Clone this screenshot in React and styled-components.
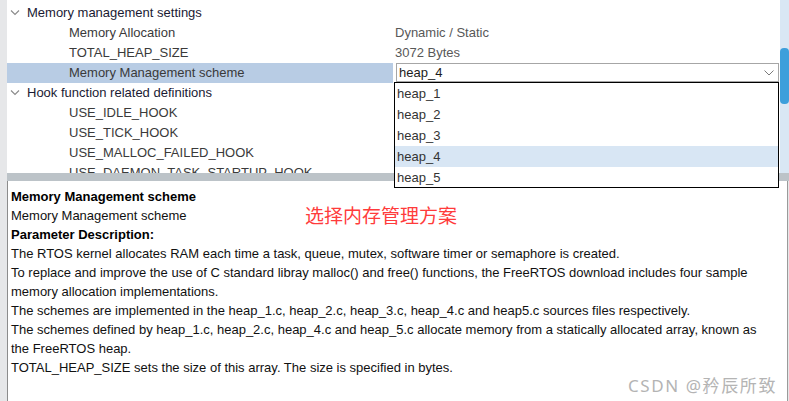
import React from "react";
import styled, { createGlobalStyle } from "styled-components";

const GlobalStyle = createGlobalStyle`
  html, body {
    margin: 0;
    padding: 0;
    background: #ffffff;
  }
  body {
    font-family: "Liberation Sans", Arial, sans-serif;
  }
`;

const Frame = styled.div`
  width: 789px;
  height: 401px;
  display: flex;
  background: #e6e7e9;
  overflow: hidden;
`;

const LeftStrip = styled.div`
  width: 7px;
  flex: none;
  background: #e6e7e9;
`;

const Main = styled.div`
  flex: 1;
  display: flex;
  flex-direction: column;
  min-width: 0;
`;

const TopPanel = styled.div`
  position: relative;
  height: 173px;
  flex: none;
  display: flex;
  background: #ffffff;
`;

const Tree = styled.div`
  flex: 1;
  padding-top: 3px;
  overflow: hidden;
`;

const Row = styled.div`
  display: grid;
  grid-template-columns: 386px 1fr;
  height: 20px;
  font-size: 13px;
  line-height: 20px;
`;

const NameCell = styled.div`
  display: flex;
  align-items: center;
  padding-left: ${(p) => (p.$group ? "3px" : "62px")};
  background: ${(p) => (p.$selected ? "#b8cce4" : "transparent")};
  color: ${(p) => (p.$group ? "#1a1a33" : "#3a3a3a")};
  white-space: nowrap;
`;

const Chevron = styled.svg`
  width: 10px;
  height: 8px;
  margin-right: 7px;
  flex: none;
`;

const ValueCell = styled.div`
  padding-left: 2px;
  color: #585858;
  white-space: nowrap;
`;

const Combo = styled.div`
  height: 19px;
  margin: 0 1px;
  border: 1px solid #a6a6a6;
  box-sizing: border-box;
  display: flex;
  align-items: center;
  justify-content: space-between;
  padding: 0 4px 0 2px;
  color: #1c1c1c;
  background: #ffffff;
`;

const ComboArrow = styled.svg`
  width: 10px;
  height: 6px;
`;

const ListBox = styled.ul`
  position: absolute;
  left: 387px;
  top: 82px;
  width: 385px;
  height: 106px;
  box-sizing: border-box;
  margin: 0;
  padding: 0;
  list-style: none;
  border: 1px solid #000000;
  background: #ffffff;
  z-index: 2;
`;

const ListItem = styled.li`
  height: 21px;
  line-height: 21px;
  font-size: 13px;
  padding-left: 2px;
  color: #333333;
  background: ${(p) => (p.$active ? "#d8e6f4" : "transparent")};
`;

const ScrollTrack = styled.div`
  width: 9px;
  flex: none;
  background: #d9e7f4;
  position: relative;
`;

const ScrollThumb = styled.div`
  position: absolute;
  left: 0;
  top: 48px;
  width: 9px;
  height: 56px;
  border-radius: 4px;
  background: #3d9fdb;
`;

const Splitter = styled.div`
  height: 8px;
  flex: none;
  background: #bcc3c8;
`;

const BottomPanel = styled.div`
  position: relative;
  flex: 1;
  background: #ffffff;
  border-left: 1px solid #8c8c8c;
  border-right: 1px solid #9a9a9a;
  margin-right: 1px;
  padding: 6px 0 0 3px;
  font-size: 13px;
  line-height: 19px;
  color: #111111;
`;

const Line = styled.div`
  font-weight: ${(p) => (p.$bold ? "700" : "400")};
  color: ${(p) => (p.$bold ? "#000000" : "#111111")};
  white-space: nowrap;
`;

const Note = styled.div`
  position: absolute;
  left: 297px;
  top: 22px;
  font-family: "Noto Sans CJK SC", sans-serif;
  font-size: 19px;
  line-height: 24px;
  color: #ff3b3b;
`;

const Watermark = styled.div`
  position: absolute;
  right: 10px;
  bottom: 4px;
  font-family: "Noto Sans", "Noto Sans CJK SC", sans-serif;
  font-size: 17px;
  letter-spacing: 1.6px;
  line-height: 22px;
  color: #b4b4b4;
`;

const rows = [
  { name: "Memory management settings", group: true },
  { name: "Memory Allocation", value: "Dynamic / Static" },
  { name: "TOTAL_HEAP_SIZE", value: "3072 Bytes" },
  { name: "Memory Management scheme", combo: "heap_4", selected: true },
  { name: "Hook function related definitions", group: true },
  { name: "USE_IDLE_HOOK" },
  { name: "USE_TICK_HOOK" },
  { name: "USE_MALLOC_FAILED_HOOK" },
  { name: "USE_DAEMON_TASK_STARTUP_HOOK" },
];

const heaps = ["heap_1", "heap_2", "heap_3", "heap_4", "heap_5"];

const description = [
  { text: "Memory Management scheme", bold: true },
  { text: "Memory Management scheme" },
  { text: "Parameter Description:", bold: true },
  { text: "The RTOS kernel allocates RAM each time a task, queue, mutex, software timer or semaphore is created." },
  { text: "To replace and improve the use of C standard libray malloc() and free() functions, the FreeRTOS download includes four sample" },
  { text: "memory allocation implementations." },
  { text: "The schemes are implemented in the heap_1.c, heap_2.c, heap_3.c, heap_4.c and heap5.c sources files respectively." },
  { text: "The schemes defined by heap_1.c, heap_2.c, heap_4.c and heap_5.c allocate memory from a statically allocated array, known as" },
  { text: "the FreeRTOS heap." },
  { text: "TOTAL_HEAP_SIZE sets the size of this array. The size is specified in bytes." },
];

function TreeChevron() {
  return (
    <Chevron viewBox="0 0 10 8">
      <path d="M1 1.5 L5 5.5 L9 1.5" fill="none" stroke="#8a8a8a" strokeWidth="1.1" />
    </Chevron>
  );
}

export default function App() {
  return (
    <>
      <GlobalStyle />
      <Frame>
        <LeftStrip />
        <Main>
          <TopPanel>
            <Tree>
              {rows.map((r) => (
                <Row key={r.name}>
                  <NameCell $group={r.group} $selected={r.selected}>
                    {r.group && <TreeChevron />}
                    {r.name}
                  </NameCell>
                  <ValueCell>
                    {r.combo ? (
                      <Combo>
                        {r.combo}
                        <ComboArrow viewBox="0 0 10 6">
                          <path d="M0.5 0.5 L5 5 L9.5 0.5" fill="none" stroke="#7a7a7a" strokeWidth="1" />
                        </ComboArrow>
                      </Combo>
                    ) : (
                      r.value
                    )}
                  </ValueCell>
                </Row>
              ))}
            </Tree>
            <ScrollTrack>
              <ScrollThumb />
            </ScrollTrack>
            <ListBox>
              {heaps.map((h) => (
                <ListItem key={h} $active={h === "heap_4"}>
                  {h}
                </ListItem>
              ))}
            </ListBox>
          </TopPanel>
          <Splitter />
          <BottomPanel>
            {description.map((d, i) => (
              <Line key={i} $bold={d.bold}>
                {d.text}
              </Line>
            ))}
            <Note>选择内存管理方案</Note>
            <Watermark>CSDN @矜辰所致</Watermark>
          </BottomPanel>
        </Main>
      </Frame>
    </>
  );
}
